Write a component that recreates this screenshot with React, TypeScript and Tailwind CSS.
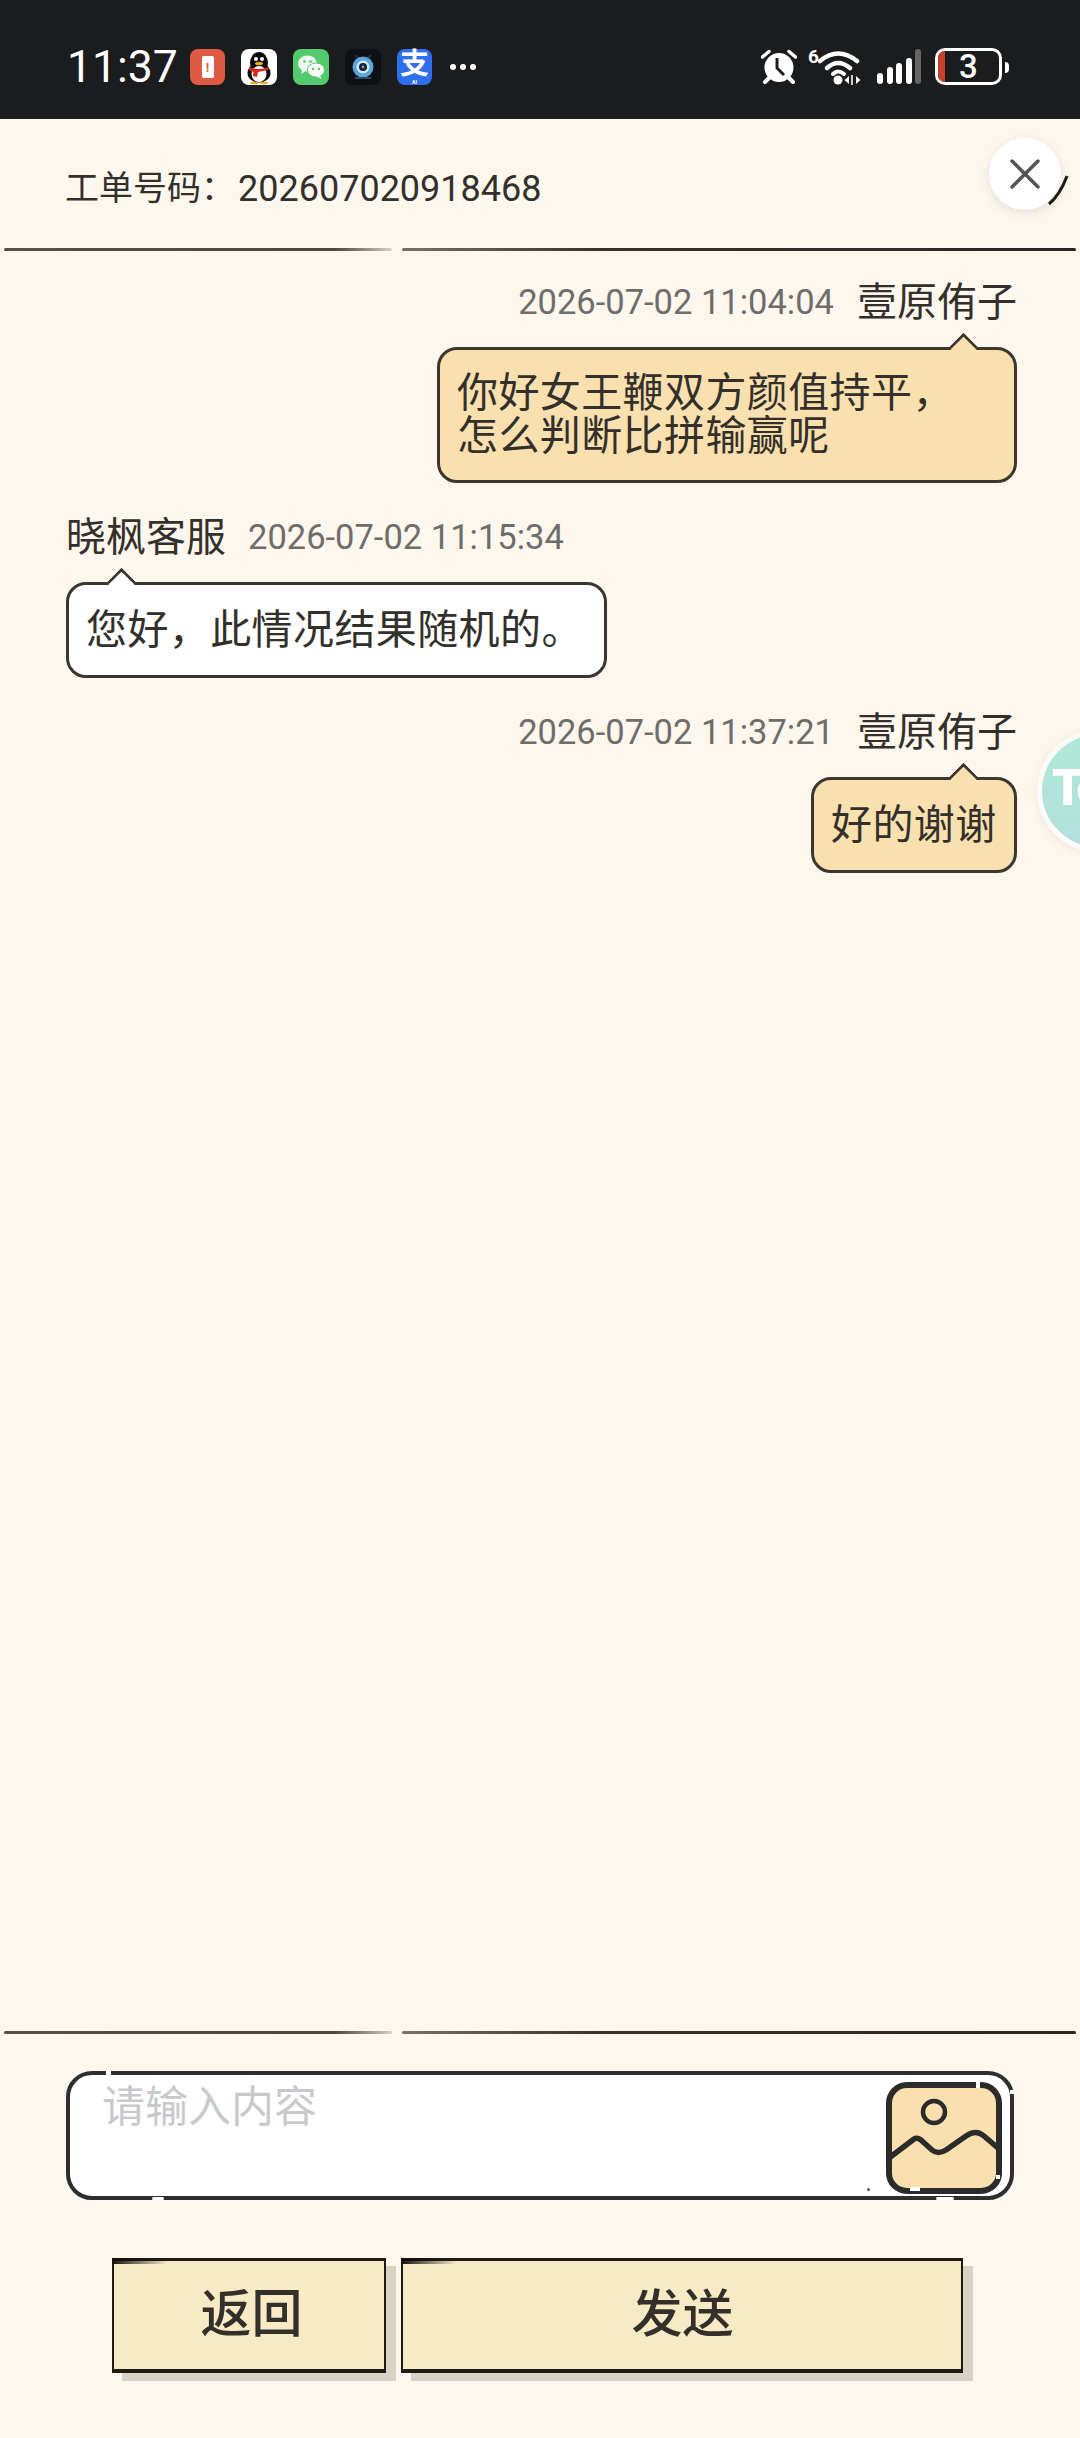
import { X } from 'lucide-react'

type Message = {
  side: 'left' | 'right'
  name: string
  time: string
  lines: string[]
  width: string
}

const messages: Message[] = [
  { side: 'right', name: '壹原侑子', time: '2026-07-02 11:04:04', lines: ['你好女王鞭双方颜值持平，', '怎么判断比拼输赢呢'], width: 'w-[580px]' },
  { side: 'left', name: '晓枫客服', time: '2026-07-02 11:15:34', lines: ['您好，此情况结果随机的。'], width: 'w-[541px]' },
  { side: 'right', name: '壹原侑子', time: '2026-07-02 11:37:21', lines: ['好的谢谢'], width: 'w-[206px]' },
]

/* ── Status bar ────────────────────────────────────────────────── */

function QQIcon() {
  return (
    <svg viewBox="0 0 36 36" className="h-[36px] w-[36px]">
      <rect width="36" height="36" rx="8" fill="#fff" />
      <ellipse cx="18" cy="14" rx="9" ry="11" fill="#0c0c0c" />
      <ellipse cx="18" cy="24" rx="11.5" ry="9.5" fill="#0c0c0c" />
      <ellipse cx="18" cy="25" rx="7.5" ry="8" fill="#fff" />
      <circle cx="15" cy="10" r="2" fill="#fff" />
      <circle cx="21" cy="10" r="2" fill="#fff" />
      <ellipse cx="18" cy="14.5" rx="4" ry="1.8" fill="#f2a81d" />
      <path d="M8 18 Q18 22 28 18 L27 21 L17 23 L16 28 L12 27 L12.5 23 L8 21Z" fill="#d8261c" />
      <ellipse cx="13" cy="34" rx="4" ry="1.2" fill="#f2a81d" />
      <ellipse cx="23" cy="34" rx="4" ry="1.2" fill="#f2a81d" />
    </svg>
  )
}

function WeChatIcon() {
  return (
    <svg viewBox="0 0 36 36" className="h-[36px] w-[36px]">
      <rect width="36" height="36" rx="8" fill="#55c96d" />
      <ellipse cx="14.5" cy="14.5" rx="9.5" ry="8" fill="#eef8ee" />
      <path d="M9 19 L8.5 25 L14 21Z" fill="#eef8ee" />
      <ellipse cx="23" cy="21" rx="8.5" ry="7" fill="#fff" stroke="#55c96d" strokeWidth="1" />
      <path d="M27 26 L28.5 30 L23 27Z" fill="#fff" />
      <circle cx="11.5" cy="12.5" r="1.3" fill="#55c96d" />
      <circle cx="17.5" cy="12.5" r="1.3" fill="#55c96d" />
      <circle cx="20" cy="20" r="1.2" fill="#55c96d" />
      <circle cx="26" cy="20" r="1.2" fill="#55c96d" />
    </svg>
  )
}

function EyeIcon() {
  return (
    <svg viewBox="0 0 36 36" className="h-[36px] w-[36px]">
      <rect width="36" height="36" rx="8" fill="#0d1014" />
      <path d="M10 6 L14 10 M26 6 L22 10" stroke="#2c3d4f" strokeWidth="1.5" />
      <circle cx="18" cy="18" r="10.5" fill="#5aa6dc" />
      <circle cx="18" cy="18" r="6.5" fill="#cfe6f5" />
      <circle cx="18" cy="18" r="4" fill="#15222e" />
      <circle cx="18" cy="18" r="1.4" fill="#7ba4c4" />
      <path d="M10 29 H26" stroke="#2e4a63" strokeWidth="2" />
    </svg>
  )
}

function AlarmIcon() {
  return (
    <svg viewBox="0 0 36 35" className="h-[35px] w-[36px]">
      <circle cx="18" cy="18.5" r="14.5" fill="#fff" />
      <path d="M1.5 8 L8 2.5 M34.5 8 L28 2.5" stroke="#fff" strokeWidth="3.5" strokeLinecap="round" />
      <path d="M8 29 L4 33 M28 29 L32 33" stroke="#fff" strokeWidth="4" strokeLinecap="round" />
      <path d="M16 9 V19 L23 26" stroke="#1b1c1e" strokeWidth="3" fill="none" />
    </svg>
  )
}

function WifiIcon() {
  return (
    <svg viewBox="0 0 46 36" className="h-[36px] w-[46px]">
      <path d="M2 12 Q20 -3 39 12" stroke="#fff" strokeWidth="4.5" fill="none" strokeLinecap="round" />
      <path d="M9 19 Q20 9 32 19" stroke="#fff" strokeWidth="4.5" fill="none" strokeLinecap="round" />
      <path d="M15 25 Q20 20 26 25" stroke="#fff" strokeWidth="4" fill="none" strokeLinecap="round" />
      <circle cx="20" cy="31" r="4.5" fill="#fff" />
      <path d="M31 27 V35 L26.5 31Z M38 27 V35 L42.5 31Z" fill="#fff" />
      <path d="M34 26 V36" stroke="#fff" strokeWidth="1.6" />
    </svg>
  )
}

function StatusBar() {
  const bars = ['h-[11px] bg-white', 'h-[17px] bg-white', 'h-[21px] bg-white', 'h-[26px] bg-white', 'h-[35px] bg-[#666]']
  return (
    <div className="flex h-[119px] shrink-0 items-start bg-[#1b1c1e] pl-[67px] pr-[71px] pt-[49px] text-white">
      <span className="w-[123px] text-[44.5px] leading-[36px] font-['Roboto',sans-serif]">11:37</span>
      <div className="flex items-center gap-[16px]">
        <div className="flex h-[36px] w-[35px] items-center justify-center rounded-[8px] bg-[#df5a42]">
          <div className="flex h-[22px] w-[12px] items-center justify-center rounded-[2px] bg-white text-[13px] font-bold leading-none text-[#df5a42]">!</div>
        </div>
        <QQIcon />
        <WeChatIcon />
        <EyeIcon />
        <div className="relative flex h-[36px] w-[35px] items-start justify-center rounded-[8px] bg-[#2f6fee] text-[29px] font-bold leading-[31px]">
          支
          <span className="absolute bottom-0 text-[5px] leading-[6px]">AI</span>
        </div>
        <div className="ml-[2px] flex gap-[4px]">
          <span className="h-[6px] w-[6px] rounded-full bg-white" />
          <span className="h-[6px] w-[6px] rounded-full bg-white" />
          <span className="h-[6px] w-[6px] rounded-full bg-white" />
        </div>
      </div>
      <div className="ml-auto flex items-start">
        <AlarmIcon />
        <span className="ml-[11px] -mt-[2px] w-[10px] text-[19px] font-bold leading-[20px]">6</span>
        <WifiIcon />
        <div className="ml-[13px] flex h-[35px] items-end gap-[3.5px]">
          {bars.map((b) => (
            <span key={b} className={`w-[6px] rounded-full ${b}`} />
          ))}
        </div>
        <div className="relative ml-[14px] -mt-[1px] flex h-[37px] w-[67px] items-center justify-center overflow-hidden rounded-[10px] border-[3px] border-white text-[33px] font-medium leading-none font-['Roboto',sans-serif]">
          <span className="absolute inset-y-0 left-0 w-[7px] bg-[#c8402e]" />
          3
        </div>
        <span className="ml-[3px] mt-[13px] h-[11px] w-[4px] rounded-r-full bg-white" />
      </div>
    </div>
  )
}

/* ── Chat ──────────────────────────────────────────────────────── */

function Divider() {
  return (
    <div className="flex h-[3px] shrink-0 gap-[10px] px-[4px]">
      <div className="h-full w-[388px] rounded-full bg-linear-to-r from-[#55504a] via-[#4a453d] via-85% to-[#d8d1c3]" />
      <div className="h-full flex-1 rounded-full bg-linear-to-r from-[#77716a] via-[#35312b] via-30% to-[#2a2722]" />
    </div>
  )
}

function Bubble({ message }: { message: Message }) {
  const right = message.side === 'right'
  return (
    <div className={`relative flex min-h-[96px] items-center rounded-[20px] border-[3px] border-[#3a3630] px-[17px] py-[22px] text-[41px] leading-[43px] tracking-[0.4px] text-[#33302b] ${message.width} ${right ? 'bg-[#f9e0ae]' : 'bg-white'}`}>
      <div>
        {message.lines.map((line) => (
          <div key={line} className="whitespace-nowrap">{line}</div>
        ))}
      </div>
      <span className={`absolute -top-[13px] h-[21px] w-[21px] rotate-45 rounded-tl-[2px] border-l-[3px] border-t-[3px] border-[#3a3630] ${right ? 'right-[40px] bg-[#f9e0ae]' : 'left-[42px] bg-white'}`} />
    </div>
  )
}

function ChatMessage({ message }: { message: Message }) {
  const right = message.side === 'right'
  const name = <span className="text-[40px] text-[#33302b]">{message.name}</span>
  const time = <span className="text-[34.5px] text-[#6f6d6a]">{message.time}</span>
  return (
    <div className={`flex flex-col ${right ? 'items-end' : 'items-start'}`}>
      <div className={`flex h-[49px] items-center leading-none ${right ? 'gap-[23px]' : 'gap-[22px]'}`}>
        {right ? time : name}
        {right ? name : time}
      </div>
      <div className="mt-[20px]">
        <Bubble message={message} />
      </div>
    </div>
  )
}

/* ── Input + buttons ───────────────────────────────────────────── */

function ImageButton() {
  return (
    <svg viewBox="0 0 116 112" className="absolute right-[8px] top-[7px] h-[112px] w-[116px]">
      <rect x="3" y="3" width="110" height="106" rx="18" fill="#f9e0ae" stroke="#2b2b2b" strokeWidth="6" />
      <circle cx="48" cy="30" r="11" fill="none" stroke="#2b2b2b" strokeWidth="4.5" />
      <path d="M3 76 L28 57 Q31 55 35 58 L46 68 Q52 73 60 68 L80 54 Q90 47 98 54 L113 67" fill="none" stroke="#2b2b2b" strokeWidth="5.5" strokeLinejoin="round" />
      <path d="M92 0 V6 M114 95 H110 M24 107 H34" stroke="#fff" strokeWidth="4" />
    </svg>
  )
}

function InputBox() {
  return (
    <div className="relative ml-[66px] mt-[37px] h-[129px] w-[948px] shrink-0 rounded-[26px] border-[4px] border-[#2e2e2e] bg-white">
      <div className="pl-[32px] pt-[7px] text-[43px] leading-[50px] text-[#c8c9cc]">请输入内容</div>
      <ImageButton />
      <span className="absolute -top-[4px] left-[36px] h-[4px] w-[5px] bg-white" />
      <span className="absolute -bottom-[4px] left-[82px] h-[3px] w-[12px] rounded-full bg-white" />
      <span className="absolute -bottom-[4px] right-[56px] h-[3px] w-[18px] rounded-full bg-white" />
      <span className="absolute -right-[4px] top-[15px] h-[4px] w-[4px] bg-white" />
      <span className="absolute bottom-[5px] right-[140px] h-[3px] w-[3px] rounded-full bg-[#555]" />
    </div>
  )
}

function SketchButton({ label, width, inset }: { label: string; width: string; inset: string }) {
  return (
    <button className={`relative flex h-[115px] items-center justify-center border-x-[2px] border-t-[3px] border-b-[4px] border-[#1f1c16] bg-[#f7eac5] text-[51px] font-medium text-[#33302b] shadow-[10px_8px_0_#d8d3c2] ${width} ${inset}`}>
      <span className="absolute -left-[2px] -top-[3px] h-[6px] w-[56px] bg-linear-to-r from-[#14110c] to-transparent" />
      {label}
    </button>
  )
}

export default function App() {
  return (
    <div className="relative flex h-[2438px] w-[1080px] flex-col overflow-hidden bg-[#fef7ee] font-['Roboto','Noto_Sans_CJK_SC',sans-serif]">
      <StatusBar />

      <div className="flex h-[129px] shrink-0 items-center pl-[65px] pt-[10px] text-[34px] text-[#33302b]">
        工单号码：<span className="ml-[3px] text-[36px]">202607020918468</span>
      </div>
      <Divider />

      <div className="flex flex-1 flex-col gap-[30px] pl-[66px] pr-[63px] pt-[27px]">
        {messages.map((m) => (
          <ChatMessage key={m.time} message={m} />
        ))}
      </div>

      <Divider />
      <InputBox />
      <div className="ml-[112px] mt-[58px] flex shrink-0 gap-[15px] pb-[65px]">
        <SketchButton label="返回" width="w-[274px]" inset="pl-[5px]" />
        <SketchButton label="发送" width="w-[562px]" inset="pl-[1px]" />
      </div>

      {/* floating close button */}
      <svg viewBox="0 0 26 34" className="absolute left-[1046px] top-[173px] h-[34px] w-[26px]">
        <path d="M3 31 Q14 22 21 3" stroke="#1f1c16" strokeWidth="3" fill="none" />
      </svg>
      <div className="absolute left-[989px] top-[138px] flex h-[72px] w-[72px] items-center justify-center rounded-full bg-white text-[#555] shadow-[0_3px_12px_rgba(0,0,0,0.1)]">
        <X size={52} strokeWidth={1.6} />
      </div>

      {/* floating side bubble */}
      <div className="absolute left-[1037px] top-[730px] h-[122px] w-[122px] rounded-full border-[5px] border-[#fdfbf6] bg-linear-to-b from-[#aee8d8] to-[#b3e1dc] pl-[10px] pt-[23px] text-[50px] font-black leading-[60px] tracking-[-2px] text-white shadow-[0_2px_10px_rgba(0,0,0,0.08)]">
        To
      </div>
    </div>
  )
}
